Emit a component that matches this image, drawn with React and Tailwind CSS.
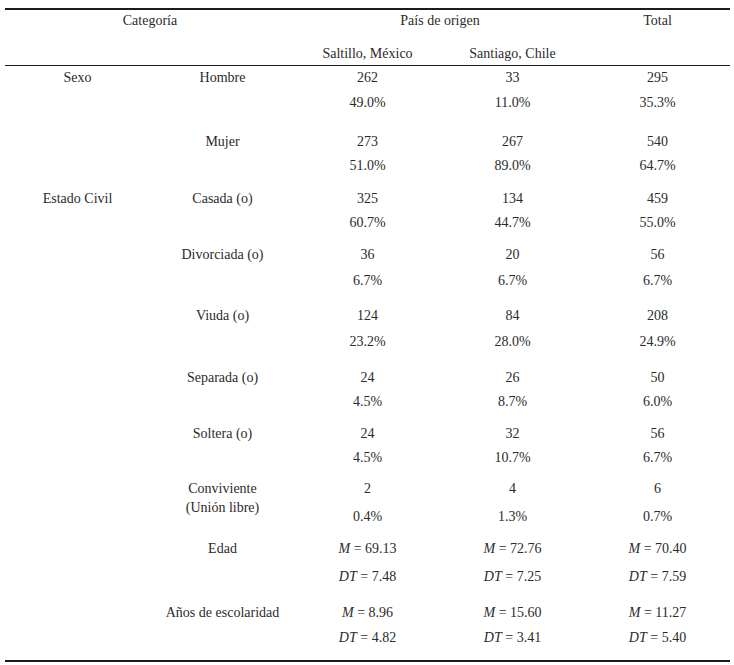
import React from "react";

const rows = [
  { mt: "mt-[1px]", c1: "Sexo", c2: "Hombre", v: ["262", "33", "295"] },
  { mt: "mt-[5px]", v: ["49.0%", "11.0%", "35.3%"] },
  { mt: "mt-[19px]", c2: "Mujer", v: ["273", "267", "540"] },
  { mt: "mt-[4px]", v: ["51.0%", "89.0%", "64.7%"] },
  { mt: "mt-[13px]", c1: "Estado Civil", c2: "Casada (o)", v: ["325", "134", "459"] },
  { mt: "mt-[4px]", v: ["60.7%", "44.7%", "55.0%"] },
  { mt: "mt-[12px]", c2: "Divorciada (o)", v: ["36", "20", "56"] },
  { mt: "mt-[6px]", v: ["6.7%", "6.7%", "6.7%"] },
  { mt: "mt-[15px]", c2: "Viuda (o)", v: ["124", "84", "208"] },
  { mt: "mt-[6px]", v: ["23.2%", "28.0%", "24.9%"] },
  { mt: "mt-[16px]", c2: "Separada (o)", v: ["24", "26", "50"] },
  { mt: "mt-[4px]", v: ["4.5%", "8.7%", "6.0%"] },
  { mt: "mt-[12px]", c2: "Soltera (o)", v: ["24", "32", "56"] },
  { mt: "mt-[4px]", v: ["4.5%", "10.7%", "6.7%"] },
  { mt: "mt-[11px]", c2: ["Conviviente", "(Unión libre)"], v: ["2", "4", "6"] },
  { mt: "mt-[8px]", v: ["0.4%", "1.3%", "0.7%"] },
  { mt: "mt-[12px]", c2: "Edad", stat: "M", v: ["69.13", "72.76", "70.40"] },
  { mt: "mt-[8px]", stat: "DT", v: ["7.48", "7.25", "7.59"] },
  { mt: "mt-[16px]", c2: "Años de escolaridad", stat: "M", v: ["8.96", "15.60", "11.27"] },
  { mt: "mt-[5px]", stat: "DT", v: ["4.82", "3.41", "5.40"] },
];

function Cell({ children }) {
  return <div className="flex items-center justify-center text-center">{children}</div>;
}

function Row({ row }) {
  const twoLines = Array.isArray(row.c2);
  return (
    <div className={`grid grid-cols-5 grid-rows-[20px] h-[20px] ${row.mt}`}>
      <Cell>{row.c1}</Cell>
      {twoLines ? (
        <div className="h-[20px] text-center leading-[19px] whitespace-nowrap">
          {row.c2[0]}
          <br />
          {row.c2[1]}
        </div>
      ) : (
        <Cell>{row.c2}</Cell>
      )}
      {row.v.map((val, i) => (
        <Cell key={i}>
          {row.stat ? (
            <span>
              <i>{row.stat}</i> = {val}
            </span>
          ) : (
            val
          )}
        </Cell>
      ))}
    </div>
  );
}

export default function App() {
  return (
    <div className="w-[734px] h-[665px] bg-white overflow-hidden pt-[8px] font-['Liberation_Serif',serif] text-[14px] leading-[20px] text-[#2b2b2b]">
      <div className="ml-[5px] w-[725px] border-t-2 border-b-2 border-[#1c1c1c] pt-[1px] pb-[12px]">
        {/* header */}
        <div className="border-b border-[#1c1c1c] pb-[1px]">
          <div className="grid grid-cols-5 h-[20px]">
            <div className="col-span-2 text-center">Categoría</div>
            <div className="col-span-2 text-center">País de origen</div>
            <div className="text-center">Total</div>
          </div>
          <div className="grid grid-cols-5 h-[20px] mt-[13px]">
            <div />
            <div />
            <div className="text-center">Saltillo, México</div>
            <div className="text-center">Santiago, Chile</div>
            <div />
          </div>
        </div>

        <div className="pt-[1px]">
          {rows.map((row, i) => (
            <Row key={i} row={row} />
          ))}
        </div>
      </div>
    </div>
  );
}
